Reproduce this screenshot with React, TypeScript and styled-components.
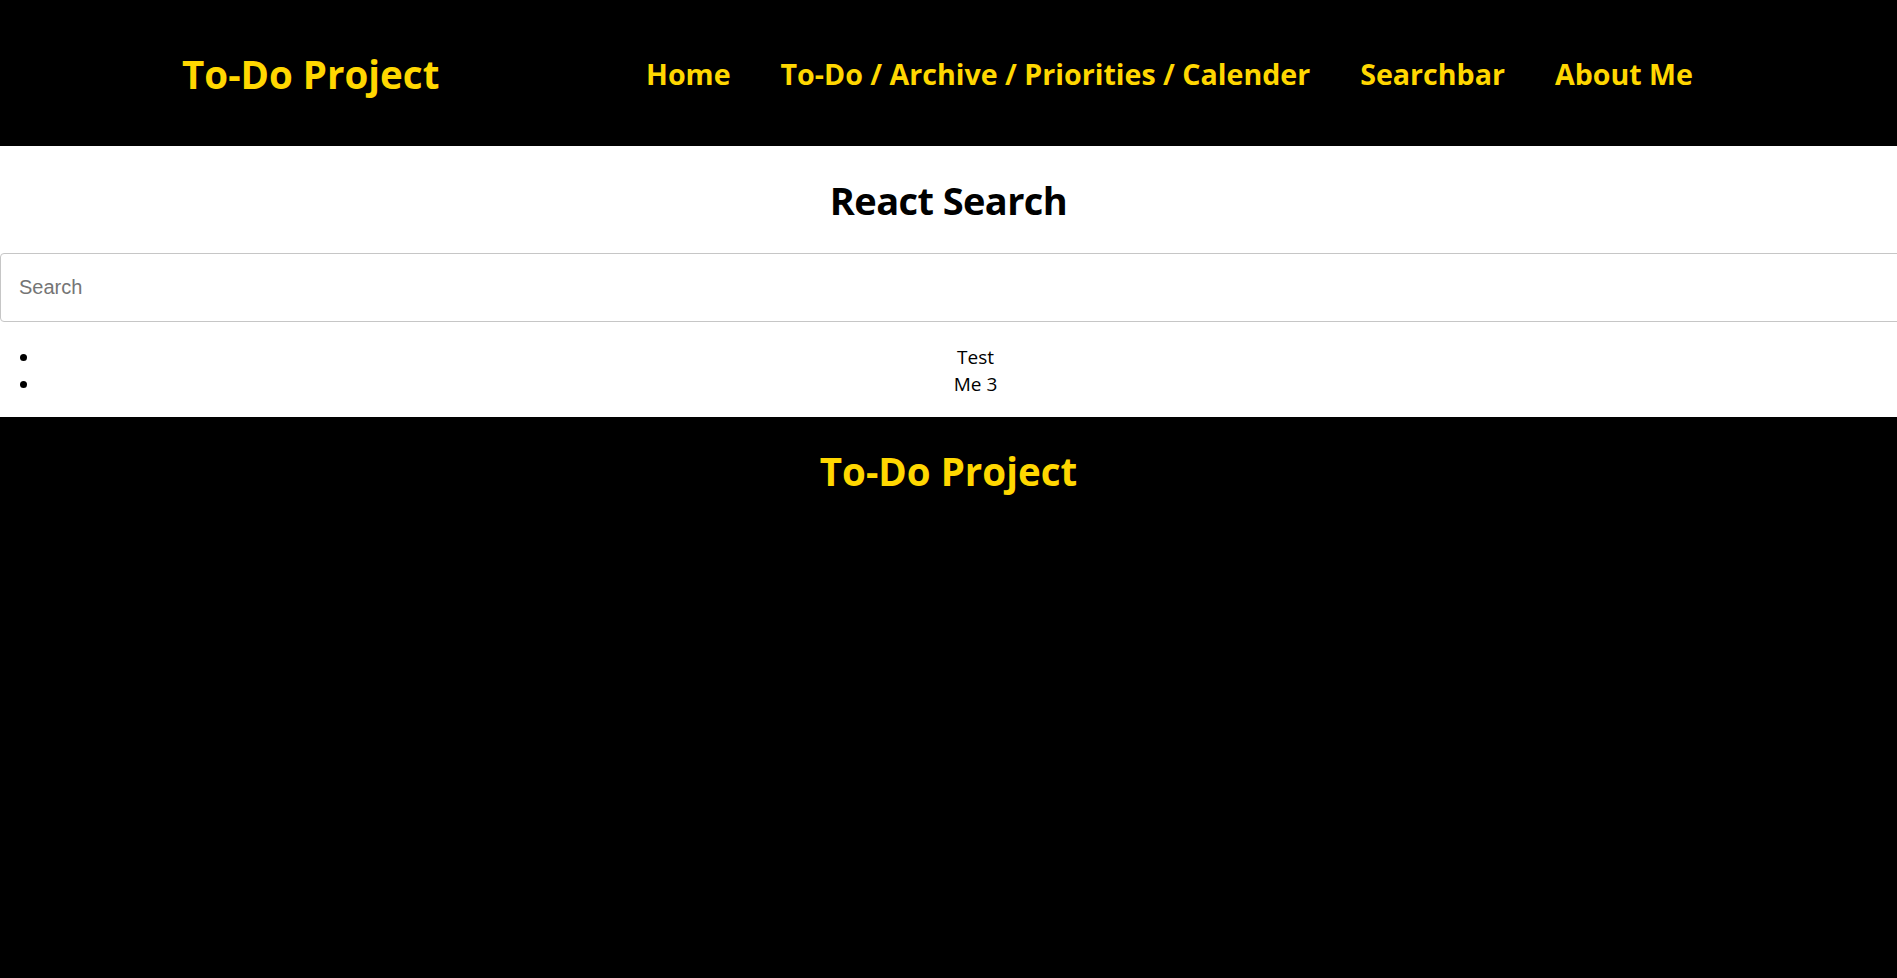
import styled, { createGlobalStyle } from "styled-components";

const GOLD = "#ffd700";
const FONT = `"Open Sans", "Noto Sans", "DejaVu Sans", sans-serif`;

const GlobalStyle = createGlobalStyle`
  html, body {
    margin: 0;
    padding: 0;
    background: #000;
    font-family: ${FONT};
  }
  * {
    box-sizing: border-box;
  }
`;

const Page = styled.div`
  min-height: 100vh;
  background: #000;
  display: flex;
  flex-direction: column;
`;

const Header = styled.header`
  height: 146px;
  display: grid;
  grid-template-columns: 464px auto;
  align-items: center;
  padding-left: 182px;
  background: #000;
`;

const Brand = styled.div`
  color: ${GOLD};
  font-size: 38.5px;
  font-weight: 700;
  line-height: 1;
  padding-top: 2px;
`;

const Nav = styled.nav`
  display: flex;
  align-items: center;
  gap: 50px;
  padding-top: 2px;
`;

const NavLink = styled.a`
  color: ${GOLD};
  font-size: 28.6px;
  font-weight: 700;
  text-decoration: none;
  line-height: 1;
  white-space: nowrap;
  cursor: pointer;
`;

const SearchSection = styled.section`
  background: #fff;
  height: 271px;
  overflow: hidden;
  padding-top: 28px;
`;

const Heading = styled.h1`
  margin: 0;
  text-align: center;
  font-size: 38px;
  font-weight: 700;
  letter-spacing: -0.6px;
  line-height: 52px;
  color: #000;
`;

const SearchInput = styled.input`
  display: block;
  margin-top: 27px;
  width: calc(100% + 40px);
  height: 69px;
  padding: 0 18px;
  border: 1px solid #c6c6c6;
  border-radius: 4px;
  font-family: "Liberation Sans", Arial, sans-serif;
  font-size: 20px;
  color: #333;
  outline: none;

  &::placeholder {
    color: #757575;
  }
`;

const ResultList = styled.ul`
  margin: 22px -14px 0 0;
  padding-left: 40px;
`;

const ResultItem = styled.li`
  text-align: center;
  font-size: 19px;
  line-height: 27px;
  color: #000;
`;

const Footer = styled.footer`
  flex: 1;
  background: #000;
  padding-top: 28px;
`;

const FooterTitle = styled.h2`
  margin: 0;
  text-align: center;
  color: ${GOLD};
  font-size: 38.5px;
  font-weight: 700;
  line-height: 52px;
`;

const navItems = [
  "Home",
  "To-Do / Archive / Priorities / Calender",
  "Searchbar",
  "About Me",
];

const results = ["Test", "Me 3"];

const App = () => {
  return (
    <Page>
      <GlobalStyle />
      <Header>
        <Brand>To-Do Project</Brand>
        <Nav>
          {navItems.map((item) => (
            <NavLink key={item}>{item}</NavLink>
          ))}
        </Nav>
      </Header>
      <SearchSection>
        <Heading>React Search</Heading>
        <SearchInput type="text" placeholder="Search" />
        <ResultList>
          {results.map((r) => (
            <ResultItem key={r}>{r}</ResultItem>
          ))}
        </ResultList>
      </SearchSection>
      <Footer>
        <FooterTitle>To-Do Project</FooterTitle>
      </Footer>
    </Page>
  );
};

export default App;
